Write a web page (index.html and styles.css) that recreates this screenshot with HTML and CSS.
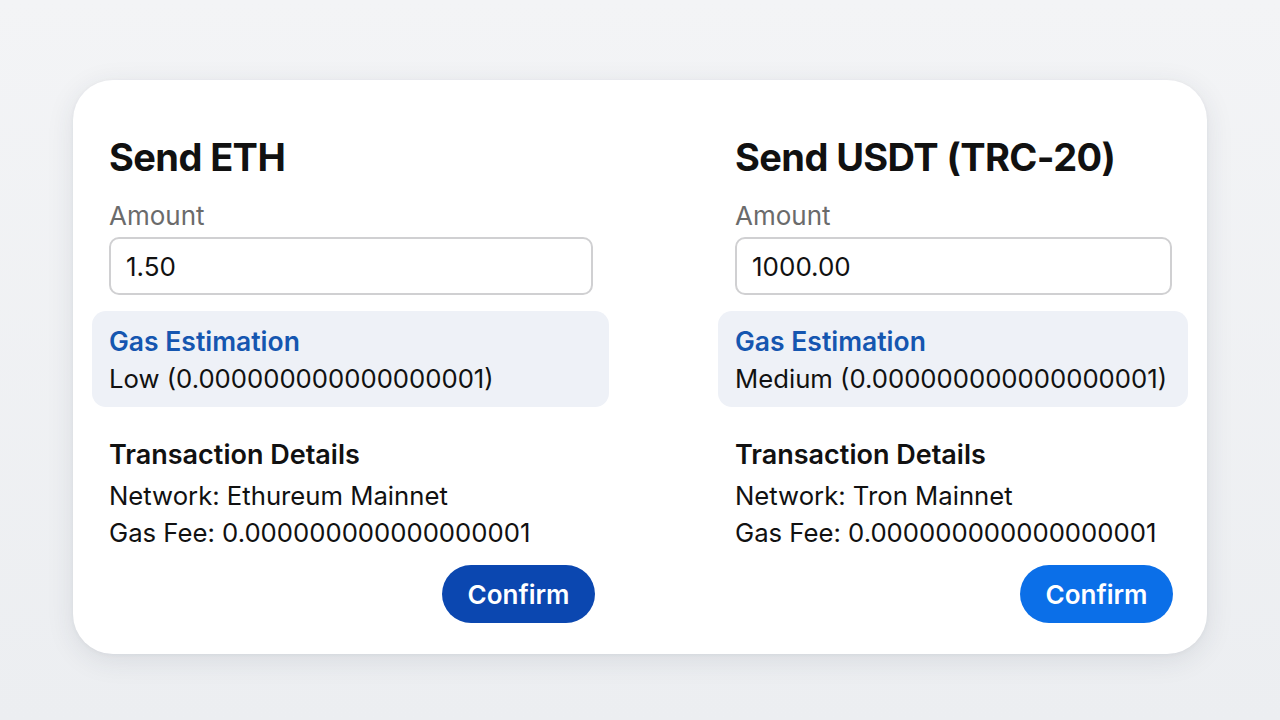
FILE: index.html
```html
<!DOCTYPE html>
<html lang="en">
<head>
    <meta charset="UTF-8">
    <meta name="viewport" content="width=device-width, initial-scale=1.0">
    <title>Send Crypto</title>
    <link rel="stylesheet" href="styles.css">
</head>
<body>
    <div id="send-card">

        <div class="send-form eth">
            <h2>Send ETH</h2>
            <label class="field-label" for="eth-amount">Amount</label>
            <input type="text" id="eth-amount" class="amount-input" value="1.50">

            <div class="gas-box">
                <p class="gas-title">Gas Estimation</p>
                <p>Low (0.000000000000000001)</p>
            </div>

            <p class="details-title">Transaction Details</p>
            <p>Network: Ethureum Mainnet</p>
            <p>Gas Fee: 0.000000000000000001</p>

            <div class="actions">
                <button class="confirm-btn dark">Confirm</button>
            </div>
        </div>

        <div class="send-form usdt">
            <h2>Send USDT (TRC-20)</h2>
            <label class="field-label" for="usdt-amount">Amount</label>
            <input type="text" id="usdt-amount" class="amount-input" value="1000.00">

            <div class="gas-box">
                <p class="gas-title">Gas Estimation</p>
                <p>Medium (0.000000000000000001)</p>
            </div>

            <p class="details-title">Transaction Details</p>
            <p>Network: Tron Mainnet</p>
            <p>Gas Fee: 0.000000000000000001</p>

            <div class="actions">
                <button class="confirm-btn">Confirm</button>
            </div>
        </div>

    </div>
</body>
</html>
```

FILE: styles.css
```css
body{
    margin: 0;
    height: 720px;
    background: linear-gradient(#f3f4f6, #eceef1);
    font-family: Inter, "Noto Sans", sans-serif;
    color: #111;
    padding-top: 80px;
    box-sizing: border-box;
}
#send-card{
    width: 1134px;
    margin: 0 auto;
    box-sizing: border-box;
    background-color: white;
    border-radius: 40px;
    padding: 53px 35px 31px 36px;
    display: grid;
    grid-template-columns: 484px 437px;
    justify-content: space-between;
    box-shadow: 0 6px 28px rgba(40, 50, 70, 0.10), 0 1px 4px rgba(40, 50, 70, 0.05);
}
.send-form{
    display: flex;
    flex-direction: column;
}
.send-form p{
    margin: 0px;
    font-size: 25.7px;
    line-height: 37px;
    white-space: nowrap;
}
h2{
    margin: 0 0 16px 0;
    font-size: 38px;
    line-height: 48px;
    font-weight: 700;
    letter-spacing: -0.6px;
}
.field-label{
    font-size: 26px;
    line-height: 37px;
    color: #6b6b6b;
    margin-bottom: 3px;
}
.amount-input{
    height: 58px;
    box-sizing: border-box;
    border: 2px solid #d0d0d2;
    border-radius: 10px;
    padding: 0 15px;
    font-family: inherit;
    font-size: 26px;
    color: #111;
    outline: none;
}
.gas-box{
    margin: 16px -16px 0 -17px;
    padding: 12px 17px 10px 17px;
    background-color: #eef1f7;
    border-radius: 14px;
}
.send-form .gas-title{
    color: #1556b0;
    font-size: 26.5px;
    font-weight: 600;
}
.send-form .details-title{
    margin-top: 29px;
    margin-bottom: 4px;
    font-size: 27px;
    font-weight: 600;
}
.actions{
    display: flex;
    justify-content: flex-end;
    margin-top: 14px;
}
.confirm-btn{
    width: 153px;
    height: 58px;
    border: 0px;
    border-radius: 29px;
    background-color: #0b6fe8;
    color: white;
    font-family: inherit;
    font-size: 26px;
    font-weight: 600;
    margin-right: -1px;
}
.confirm-btn.dark{
    background-color: #0b47b0;
    margin-right: -2px;
}
```
